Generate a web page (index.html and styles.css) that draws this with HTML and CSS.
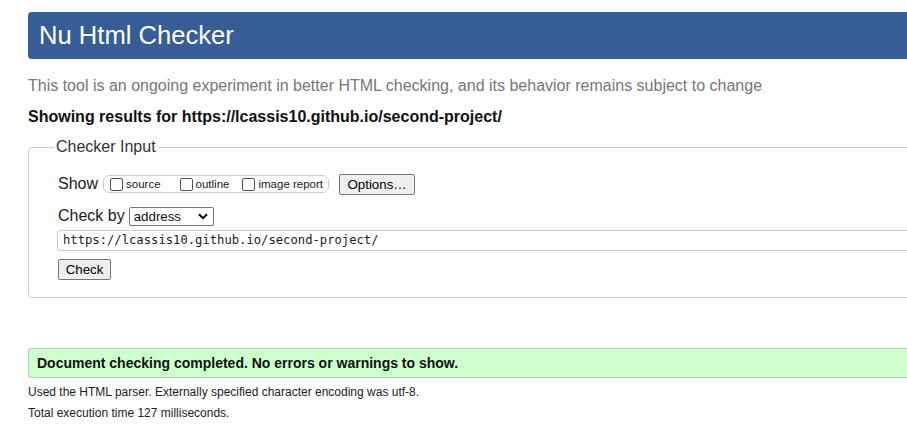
FILE: index.html
```html
<!DOCTYPE html>
<html>
<head>
<meta charset="utf-8">
<link rel="stylesheet" href="styles.css">
</head>
<body>
<div class="page">
  <h1 class="header">Nu Html Checker</h1>
  <p class="intro">This tool is an ongoing experiment in better HTML checking, and its behavior remains subject to change</p>
  <p class="showing">Showing results for https://lcassis10.github.io/second-project/</p>
  <fieldset class="input-box">
    <legend class="legend">Checker Input</legend>
    <div class="row show-row">
      <span class="label">Show</span>
      <div class="opts">
        <label class="opt opt-source"><span class="cb"></span>source</label>
        <label class="opt opt-outline"><span class="cb"></span>outline</label>
        <label class="opt"><span class="cb"></span>image report</label>
      </div>
      <span class="btn options">Options…</span>
    </div>
    <div class="row checkby-row">
      <span class="label">Check by</span>
      <span class="select">address<svg class="chev" width="10" height="7" viewBox="0 0 10 7"><path d="M1 1.2 L5 5.2 L9 1.2" fill="none" stroke="#000" stroke-width="2"/></svg></span>
    </div>
    <div class="url">https://lcassis10.github.io/second-project/</div>
    <div class="row"><span class="btn check">Check</span></div>
  </fieldset>
  <div class="success">Document checking completed. No errors or warnings to show.</div>
  <p class="meta">Used the HTML parser. Externally specified character encoding was utf-8.</p>
  <p class="meta">Total execution time 127 milliseconds.</p>
</div>
</body>
</html>
```
FILE: styles.css
```css
html, body {
  margin: 0;
  padding: 0;
  background: #fefefe;
  overflow: hidden;
}
body {
  font-family: "Liberation Sans", Arial, sans-serif;
  color: #111;
}
.page {
  width: 1100px;
  padding: 12px 0 0 28px;
}
.header {
  margin: 0;
  height: 47px;
  line-height: 46px;
  padding-left: 11px;
  background: #365d95;
  color: #fff;
  font-weight: normal;
  font-size: 25.6px;
  border-radius: 4px;
}
.intro {
  margin: 18px 0 0 0;
  line-height: 18px;
  font-size: 16px;
  color: #777;
}
.showing {
  margin: 13px 0 0 0;
  line-height: 18px;
  font-size: 16px;
  font-weight: bold;
  color: #111;
}
.input-box {
  margin: 12px 0 0 0;
  padding: 18px 0 17px 29px;
  border: 1px solid #ccc;
  border-radius: 4px;
  background: #fdfdfd;
  min-width: 0;
}
.legend {
  margin-left: -4px;
  padding: 0 2px 0 2px;
  font-size: 16px;
  line-height: 18px;
  color: #333;
}
.row {
  display: flex;
  align-items: center;
}
.label {
  font-size: 16px;
  color: #222;
}
.show-row {
  height: 20px;
}
.opts {
  display: flex;
  align-items: center;
  margin-left: 5px;
  height: 16px;
  padding: 0 5px 0 6px;
  border: 1px solid #ccc;
  border-radius: 6px;
}
.opt {
  display: flex;
  align-items: center;
  font-size: 11.5px;
  color: #222;
}
.opt-source { margin-right: 19px; }
.opt-outline { margin-right: 13px; }
.cb {
  display: inline-block;
  width: 11px;
  height: 11px;
  border: 1px solid #555;
  border-radius: 2px;
  background: #fff;
  margin-right: 3px;
}
.btn {
  display: inline-flex;
  align-items: center;
  justify-content: center;
  box-sizing: border-box;
  border: 1px solid #767676;
  border-radius: 2px;
  background: #efefef;
  font-size: 13.3px;
  color: #000;
}
.options {
  margin-left: 10px;
  width: 76px;
  height: 21px;
}
.checkby-row {
  margin-top: 12px;
  height: 20px;
}
.select {
  margin-left: 4px;
  box-sizing: border-box;
  width: 85px;
  height: 19px;
  border: 1px solid #767676;
  border-radius: 2px;
  background: #fff;
  font-size: 13.3px;
  padding-left: 4px;
  display: flex;
  align-items: center;
  justify-content: space-between;
  padding-right: 5px;
}
.url {
  margin-top: 4px;
  box-sizing: border-box;
  height: 21px;
  border: 1px solid #ccc;
  border-right: none;
  border-radius: 4px 0 0 4px;
  background: #fff;
  padding-left: 5px;
  font-family: "DejaVu Sans Mono", "Liberation Mono", monospace;
  font-size: 12.2px;
  line-height: 19px;
  color: #222;
  margin-left: -1px;
}
.check {
  margin-top: 8px;
  width: 53px;
  height: 21px;
}
.success {
  margin-top: 50px;
  box-sizing: border-box;
  height: 30px;
  line-height: 28px;
  border: 1px solid #bbcbbb;
  border-right: none;
  border-radius: 3px 0 0 3px;
  background: #ccffcc;
  padding-left: 8px;
  font-size: 14px;
  font-weight: bold;
  color: #111;
}
.meta {
  margin: 7px 0 0 0;
  font-size: 12px;
  line-height: 15px;
  color: #222;
}
.meta + .meta {
  margin-top: 6px;
}
```
